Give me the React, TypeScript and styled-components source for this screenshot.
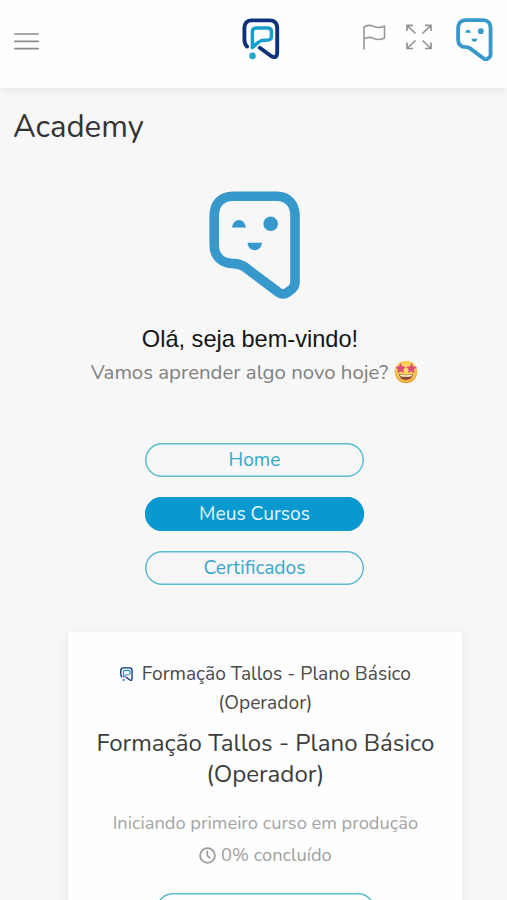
import React from "react";
import styled, { createGlobalStyle } from "styled-components";

const sans = `Nunito, Lato, "Open Sans", sans-serif`;

const GlobalStyle = createGlobalStyle`
  * { box-sizing: border-box; }
  html, body { margin: 0; height: 100%; overflow: hidden; background: #f7f7f7; }
  body { font-family: ${sans}; color: #333; }
  h1, h2, h3, p { margin: 0; font-weight: 400; }
  button { font-family: inherit; }
`;

const Page = styled.div`
  width: 100%;
  height: 900px;
  overflow: hidden;
  display: flex;
  flex-direction: column;
  background: #f7f7f7;
`;

const Header = styled.header`
  flex: none;
  height: 88px;
  display: grid;
  grid-template-columns: 1fr auto 1fr;
  align-items: start;
  padding: 0 14px;
  background: #fefefe;
  box-shadow: 0 1px 9px rgba(0, 0, 0, 0.09);
`;

const MenuButton = styled.button`
  width: 25px;
  height: 17px;
  margin-top: 32.5px;
  padding: 0;
  border: 0;
  background: none;
`;

const Brand = styled.div`
  display: flex;
  margin: 18px 0 0 15px;
`;

const Actions = styled.div`
  display: flex;
  justify-content: flex-end;
  align-items: flex-start;
  padding-top: 18px;
`;

const ActionIcon = styled.div<{ $top: number; $gap: number }>`
  display: flex;
  margin-top: ${(p) => p.$top}px;
  margin-right: ${(p) => p.$gap}px;
`;

const PageTitle = styled.h1`
  margin: 20px 0 0 13px;
  font-size: 31.2px;
  line-height: 38px;
  color: #333;
`;

const Hero = styled.section`
  display: flex;
  flex-direction: column;
  align-items: center;
  padding-top: 45px;
  padding-left: 2px;
`;

const Greeting = styled.h2`
  margin: 24px 9px 0 0;
  font-family: "Liberation Sans", Arial, sans-serif;
  font-size: 23.6px;
  line-height: 32px;
  color: #151515;
  white-space: nowrap;
`;

const Subtitle = styled.p`
  display: flex;
  align-items: center;
  gap: 6px;
  margin-top: 1px;
  height: 32px;
  font-size: 20.4px;
  color: #818181;
  white-space: nowrap;
`;

const Tabs = styled.nav`
  display: flex;
  flex-direction: column;
  align-items: center;
  gap: 20px;
  margin: 54.8px 0 0 2px;
`;

const Pill = styled.button<{ $active?: boolean }>`
  width: 219px;
  height: 34.2px;
  padding: 0;
  border: 0;
  box-shadow: inset 0 0 0 1.5px ${(p) => (p.$active ? "#0799d0" : "#5bbccf")};
  border-radius: 17px;
  background: ${(p) => (p.$active ? "#0799d0" : "transparent")};
  color: ${(p) => (p.$active ? "#e4f6fc" : "#35a6cb")};
  font-size: 19.2px;
  line-height: 34px;
`;

const Card = styled.article`
  width: 394px;
  height: 300px;
  flex: none;
  margin: 46.8px 0 0 68.4px;
  padding-top: 28px;
  display: flex;
  flex-direction: column;
  align-items: center;
  border-radius: 4px;
  background: #fefefe;
  box-shadow: 0 2px 12px rgba(0, 0, 0, 0.07);
  text-align: center;
`;

const CourseName = styled.h3`
  font-size: 19.2px;
  line-height: 29px;
  color: #4a4a4a;
`;

const InlineMark = styled.span`
  display: inline-block;
  margin-right: 9px;
  vertical-align: -1px;
  line-height: 0;
`;

const CourseTitle = styled.h2`
  margin-top: 9.8px;
  font-size: 24.1px;
  line-height: 31.5px;
  color: #3c3c3c;
`;

const Description = styled.p`
  margin-top: 16.2px;
  font-size: 18.3px;
  line-height: 32px;
  color: #a4a4a4;
`;

const Progress = styled.p`
  display: flex;
  align-items: center;
  gap: 5px;
  height: 32px;
  font-size: 18.3px;
  color: #a0a0a0;
`;

const CardButton = styled(Pill)`
  flex: none;
  margin-top: 22.2px;
`;

function MenuIcon() {
  return (
    <svg width="25" height="17" viewBox="0 0 25 17" stroke="#8a8a8a" strokeWidth="1.7" strokeLinecap="round" display="block">
      <path d="M.8 1H24.200M.8 8.300H24.200M.8 15.700H24.200" />
    </svg>
  );
}

function BrandMark({ size }: { size: number }) {
  return (
    <svg width={size} height={(size * 42) / 38} viewBox="0 0 38 42" fill="none" strokeLinejoin="round" strokeLinecap="round">
      <path d="M5 28.500Q2.400 26 2.400 21.500V10Q2.400 2.400 10 2.400H27.500Q35.200 2.400 35.200 10V34Q35.200 41.500 29 38L17.800 29.800" stroke="#0d327b" strokeWidth="3.900" />
      <path d="M10.400 29.500V13.500Q10.400 9.900 14.500 9.900H25.500Q29.400 9.900 29.400 13.500V18.500Q29.400 21.400 26.500 21.900L19.500 22.600Q17.500 23 16 24.700L10.400 29.500" stroke="#189fc9" strokeWidth="3.500" />
      <circle cx="10.500" cy="37.900" r="3.300" fill="#20a8cf" />
    </svg>
  );
}

function Mascot({ width }: { width: number }) {
  return (
    <svg width={width} height={(width * 108) / 92} viewBox="0 0 92 108">
      <path
        d="M24 5.200H68C79 5.200 86 13 86 25V91C86 94 85.300 95.800 83 98L78.500 101.400C75.500 103.600 72.500 103.400 69.500 101.400L36 76.200C32 73.300 29 72.600 25 72.600C12 72.600 5.200 65 5.200 54V25C5.200 13 12 5.200 24 5.200Z"
        fill="none"
        stroke="#3798cb"
        strokeWidth="9.600"
        strokeLinejoin="round"
      />
      <path d="M22.800 36.500Q24.500 29 30 29Q35.500 29 37 36.500Z" fill="#3798cb" />
      <circle cx="61.700" cy="32.800" r="7.300" fill="#3798cb" />
      <path d="M38.500 51.800H53Q52 59.300 45.700 59.300Q39.500 59.300 38.500 51.800Z" fill="#3798cb" />
    </svg>
  );
}

function FlagIcon() {
  return (
    <svg width="24" height="27" viewBox="0 0 24 27" fill="none" stroke="#989898" strokeWidth="1.600" strokeLinecap="round" strokeLinejoin="round">
      <path d="M2 25V3C5 .7 8.500 1 12 2.500C15.500 4 18.500 4 22.500 2V14C18.500 16 15.500 16 12 14.500C8.500 13 5 13 2 15" />
    </svg>
  );
}

function ExpandIcon() {
  return (
    <svg width="26" height="26" viewBox="0 0 26 26" fill="none" stroke="#949494" strokeWidth="1.700">
      <path d="M1 7V1.300H7M1 1.300L9.500 9.500M19 1.300H25V7M25 1.300L16.500 9.500M1 18.500V24.500H7M1 24.500L9.500 16.500M19 24.500H25V18.500M25 24.500L16.500 16.500" />
    </svg>
  );
}

function StarEyes() {
  return (
    <svg width="24" height="24" viewBox="0 0 24 24">
      <defs>
        <radialGradient id="face" cx="50%" cy="40%" r="60%">
          <stop offset="0" stopColor="#ffdf65" />
          <stop offset=".72" stopColor="#f8c951" />
          <stop offset="1" stopColor="#e69b3b" />
        </radialGradient>
      </defs>
      <circle cx="12" cy="12" r="11.300" fill="url(#face)" />
      <path d="M5 13.800Q12 15.800 19 13.800Q18.500 20 12 20Q5.500 20 5 13.800Z" fill="#8e4a35" />
      <path d="M6 14.600Q12 16 18 14.600L17.600 16.200Q12 17.300 6.400 16.200Z" fill="#fff3dd" />
      <path d="M6.500 3L8.200 6.200L11.800 6.900L9.300 9.500L9.900 13.100L6.600 11.500L3.400 13.200L3.900 9.600L1.200 7.100L4.900 6.400Z" fill="#dc4f78" />
      <path d="M17.500 3L19.100 6.400L22.800 7.100L20.100 9.600L20.600 13.200L17.400 11.500L14.100 13.100L14.700 9.500L12.200 6.900L15.800 6.200Z" fill="#dc4f78" />
    </svg>
  );
}

function ClockIcon() {
  return (
    <svg width="17" height="17" viewBox="0 0 17 17" fill="none" stroke="#9c9c9c" strokeWidth="1.800" strokeLinecap="round">
      <circle cx="8.500" cy="8.500" r="7.400" />
      <path d="M8.300 4.300V8.700L10.700 10.700" />
    </svg>
  );
}

const tabs = ["Home", "Meus Cursos", "Certificados"];

export default function App() {
  return (
    <Page>
      <GlobalStyle />
      <Header>
        <MenuButton aria-label="Menu">
          <MenuIcon />
        </MenuButton>
        <Brand>
          <BrandMark size={38} />
        </Brand>
        <Actions>
          <ActionIcon $top={6} $gap={20}><FlagIcon /></ActionIcon>
          <ActionIcon $top={6} $gap={24}><ExpandIcon /></ActionIcon>
          <Mascot width={37} />
        </Actions>
      </Header>
      <PageTitle>Academy</PageTitle>
      <Hero>
        <Mascot width={92} />
        <Greeting>Olá, seja bem-vindo!</Greeting>
        <Subtitle>
          Vamos aprender algo novo hoje?
          <StarEyes />
        </Subtitle>
      </Hero>
      <Tabs>
        {tabs.map((label) => (
          <Pill key={label} $active={label === "Meus Cursos"}>{label}</Pill>
        ))}
      </Tabs>
      <Card>
        <CourseName>
          <InlineMark><BrandMark size={13} /></InlineMark>
          Formação Tallos - Plano Básico
          <br />
          (Operador)
        </CourseName>
        <CourseTitle>
          Formação Tallos - Plano Básico
          <br />
          (Operador)
        </CourseTitle>
        <Description>Iniciando primeiro curso em produção</Description>
        <Progress>
          <ClockIcon />
          0% concluído
        </Progress>
        <CardButton aria-label="Curso" />
      </Card>
    </Page>
  );
}
